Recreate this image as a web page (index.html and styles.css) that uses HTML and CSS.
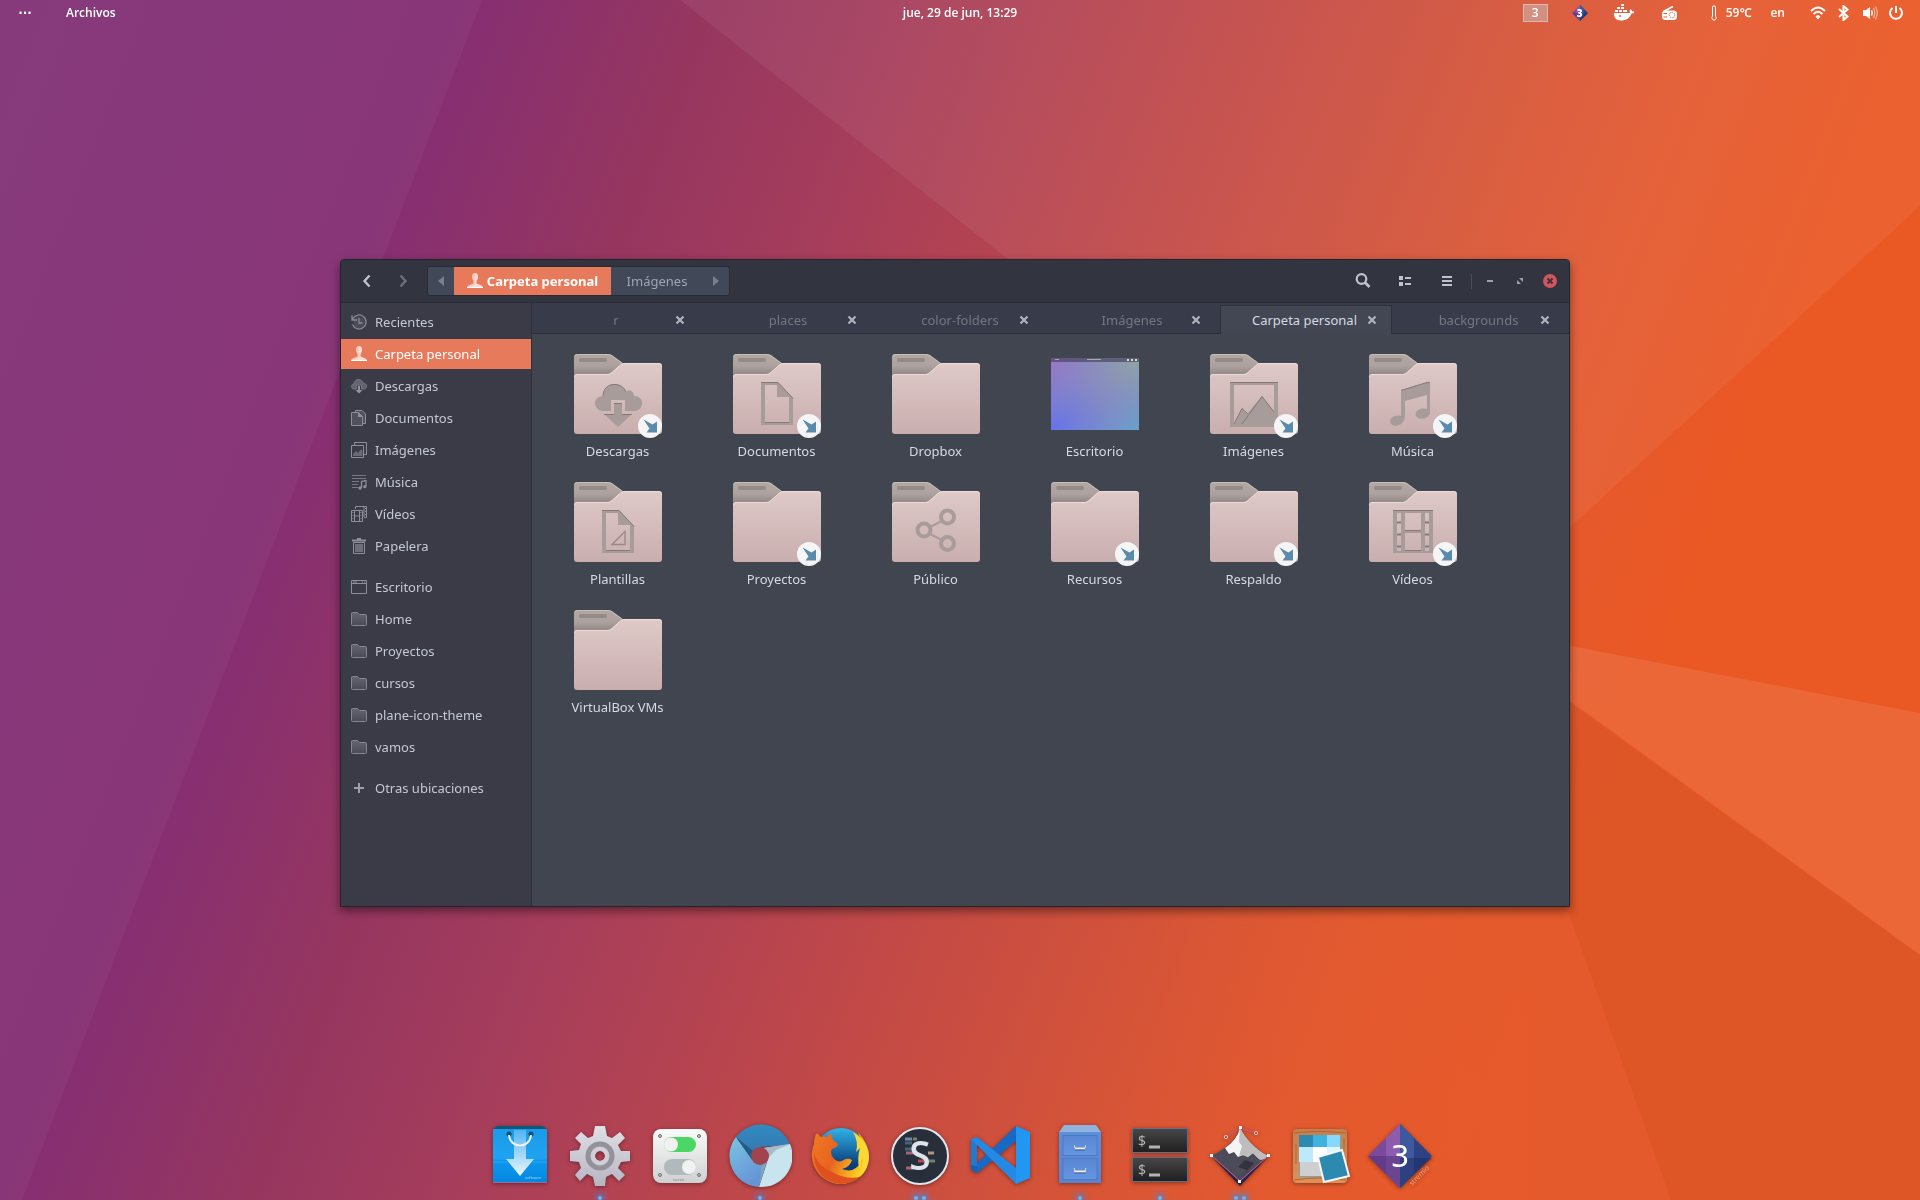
FILE: index.html
```html
<!DOCTYPE html>
<html lang="es">
<head>
<meta charset="utf-8">
<meta name="viewport" content="width=device-width, initial-scale=1">
<title>Archivos</title>
<link rel="stylesheet" href="styles.css">
</head>
<body>
<svg class="defs" aria-hidden="true">
  <defs>
    <linearGradient id="gFront" x1="0" y1="0" x2="0" y2="1"><stop offset="0" stop-color="#decac8"/><stop offset="1" stop-color="#c9aeae"/></linearGradient>
    <linearGradient id="gBack" x1="0" y1="0" x2="0" y2="1"><stop offset="0" stop-color="#b2a8a3"/><stop offset=".5" stop-color="#ada29e"/><stop offset="1" stop-color="#877d7b"/></linearGradient>
    <linearGradient id="gDesk" x1="0" y1="1" x2="1" y2="0"><stop offset="0" stop-color="#6170ee"/><stop offset=".5" stop-color="#8489c4"/><stop offset="1" stop-color="#93a89f"/></linearGradient>
    <linearGradient id="gDesk2" x1="0" y1="0" x2="1" y2="1"><stop offset="0" stop-color="#a070c4" stop-opacity=".75"/><stop offset=".5" stop-color="#8888c8" stop-opacity=".1"/><stop offset="1" stop-color="#62a6cc" stop-opacity=".85"/></linearGradient>
    <linearGradient id="gBag" x1="0" y1="0" x2="0" y2="1"><stop offset="0" stop-color="#1b9bea"/><stop offset=".55" stop-color="#1fa3f0"/><stop offset=".58" stop-color="#0d98ef"/><stop offset="1" stop-color="#0586df"/></linearGradient>
    <linearGradient id="gArrow" x1="0" y1="0" x2="0" y2="1"><stop offset="0" stop-color="#51b6f3"/><stop offset="1" stop-color="#eaf6fd"/></linearGradient>
    <linearGradient id="gGear" x1="0" y1="0" x2="0" y2="1"><stop offset="0" stop-color="#e0dfe4"/><stop offset="1" stop-color="#b6b5c3"/></linearGradient>
    <linearGradient id="gTweak" x1="0" y1="0" x2="0" y2="1"><stop offset="0" stop-color="#fafafa"/><stop offset="1" stop-color="#cfd0d1"/></linearGradient>
    <linearGradient id="gDark" x1="0" y1="0" x2="0" y2="1"><stop offset="0" stop-color="#474747"/><stop offset="1" stop-color="#1f1f1f"/></linearGradient>
    <linearGradient id="gCab" x1="0" y1="0" x2="0" y2="1"><stop offset="0" stop-color="#5b90dc"/><stop offset="1" stop-color="#5a83cf"/></linearGradient>
    <linearGradient id="gDrawer" x1="0" y1="0" x2="0" y2="1"><stop offset="0" stop-color="#5a86d3"/><stop offset="1" stop-color="#6496e2"/></linearGradient>
    <linearGradient id="gFox" x1="0" y1="0" x2="1" y2=".4"><stop offset="0" stop-color="#ee7a22"/><stop offset=".5" stop-color="#e8641f"/><stop offset="1" stop-color="#fbd324"/></linearGradient>
    <linearGradient id="gGlobe" x1="0" y1="0" x2="0" y2="1"><stop offset="0" stop-color="#2fb3e6"/><stop offset=".7" stop-color="#0b3f7c"/><stop offset="1" stop-color="#0a2a5e"/></linearGradient>
    <linearGradient id="gCh1" x1="0" y1="0" x2="0" y2="1"><stop offset="0" stop-color="#2f8bc2"/><stop offset="1" stop-color="#3b74ad"/></linearGradient>
    <linearGradient id="gCh2" x1="0" y1="0" x2=".5" y2="1"><stop offset="0" stop-color="#7cc5e2"/><stop offset="1" stop-color="#6595d6"/></linearGradient>
    <linearGradient id="gWood" x1="0" y1="0" x2="0" y2="1"><stop offset="0" stop-color="#c67f4c"/><stop offset="1" stop-color="#dd9157"/></linearGradient>
    <linearGradient id="gSide" x1="0" y1="0" x2="0" y2="1"><stop offset="0" stop-color="#666673"/><stop offset="1" stop-color="#4a4a57"/></linearGradient>

    <symbol id="folder" viewBox="0 0 88 84">
      <path d="M0 3Q0 0 3 0H34Q36 0 38 1L50 10V24H0Z" fill="url(#gBack)"/>
      <path d="M1 2Q2 .5 4 .5H34Q36 .5 38 2L48 9" fill="none" stroke="#d2c6c2" stroke-opacity=".7"/>
      <rect x="5" y="4" width="28" height="4" rx="2" fill="#948a88"/>
      <path d="M0 23Q0 20 3 20H34Q36 20 38 18L46 11Q48 9 50 9H85Q88 9 88 12V77Q88 80 85 80H3Q0 80 0 77Z" fill="url(#gFront)"/>
      <path d="M.5 23Q1 20.500 3 20.500H34Q36 20.500 38 18.500L46 11.500Q48 9.500 50 9.500H85Q87 9.500 87.500 12" fill="none" stroke="#f0e0de" stroke-opacity=".8"/>
    </symbol>
    <symbol id="link" viewBox="0 0 24 24">
      <circle cx="12" cy="12" r="12" fill="#f6f5f6"/>
      <path d="M5.500 5.500L14.500 10.500L19 7.500V18.500H8.500L11.500 14.500Z" fill="#5b8bab"/>
    </symbol>
    <symbol id="e-down" viewBox="0 0 88 84">
      <path d="M29 57C24 57 21 53 21 49C21 45 25 42 29 42C29 35 34 30 40 30C46 30 50 33 52 38C55 35 60 37 60 42C65 42 68 45 68 49C68 53 65 57 61 57H51V46H37V57Z"/><path d="M40 49H48V60H58L44 73L30 60H40Z"/><path d="M29 42C29 35 34 30.500 40 30.500C46 30.500 50 33 52 38M40 49.500H48M30 60.500H40M48 60.500H58" fill="none" stroke="#85797a"/>
    </symbol>
    <symbol id="e-doc" viewBox="0 0 88 84">
      <path fill-rule="evenodd" d="M28 28H45L60 44V71H28ZM32 31V68H56V43H44V31Z"/><path d="M28 28.500H45L60 44.500M32 68.500H56" fill="none" stroke="#85797a"/>
    </symbol>
    <symbol id="e-tpl" viewBox="0 0 88 84">
      <use href="#e-doc"/><path d="M38 62.500L51 49.500V62.500Z" fill="none" stroke="#958888" stroke-width="1.300"/>
    </symbol>
    <symbol id="e-share" viewBox="0 0 88 84">
      <g fill="none" stroke="#a89c9a" stroke-width="4"><circle cx="55.500" cy="35" r="6.500"/><circle cx="32" cy="48" r="6.500"/><circle cx="55.500" cy="61.500" r="6.500"/></g><path d="M38 45L50 39M38 52L50 58" stroke="#a89c9a" stroke-width="2"/>
    </symbol>
    <symbol id="e-img" viewBox="0 0 88 84">
      <path fill-rule="evenodd" d="M20 28H68V73H20ZM24 31V70L32 54L37 60L52 42L64 58V31Z"/><path d="M20 28.500H68M24 70L32 54.500L38 60M32 70L52 42.500L64 58" fill="none" stroke="#85797a"/>
    </symbol>
    <symbol id="e-music" viewBox="0 0 88 84">
      <path d="M32 36L58 28Q61 27 61 30V58C61 62 57 65 52 65C45 64 45 57 51 55Q55 54 58 55V41L36 47V62C36 68 31 72 26 72C20 71 19 64 26 62Q30 61 32 62Z"/><path d="M32 36.500L58 28.500Q60 28 61 29" fill="none" stroke="#85797a"/>
    </symbol>
    <symbol id="e-video" viewBox="0 0 88 84">
      <path fill-rule="evenodd" d="M24 28H64V71H24ZM28 31V39H32V31ZM28 42V51H32V42ZM28 54V63H32V54ZM28 66V69H32V66ZM56 31V39H60V31ZM56 42V51H60V42ZM56 54V63H60V54ZM56 66V69H60V66ZM36 31V48H52V31ZM36 51V68H52V51Z"/><path d="M24 28.500H64M36 48.500H52M36 68.500H52M28 40.500H32M28 52.500H32M28 64.500H32M56 40.500H60M56 52.500H60M56 64.500H60" stroke="#85797a"/>
    </symbol>
    <symbol id="desk" viewBox="0 0 88 84">
      <rect y="4" width="88" height="72" fill="url(#gDesk)"/><rect y="4" width="88" height="72" fill="url(#gDesk2)"/><rect y="4" width="88" height="4" fill="#45405a" fill-opacity=".65"/><path d="M4 5.500H8M36 5.500H50" stroke="#aaa"/><path d="M76 6H78M80 6H82M84 6H86" stroke="#d8d8d0" stroke-width="2"/>
    </symbol>

    <symbol id="x" viewBox="0 0 12 12"><path d="M2.500 2.500L9.500 9.500M9.500 2.500L2.500 9.500" stroke="currentColor" stroke-width="2.200"/></symbol>
    <symbol id="person" viewBox="0 0 16 16"><path d="M8 0C10 0 11 1.500 11 4C11 6 10 7 9.500 8V10.500C12 11.500 15 12 16 14V15H0V14C1 12 4 11.500 6.500 10.500V8C6 7 5 6 5 4C5 1.500 6 0 8 0Z" fill="#f8c9bb"/><path d="M8 0C10 0 11 1.500 11 4C11 6 10 7 9.500 8V10.500C12 11.500 15 12 16 14V15H0V14C5 13 8 13 8 9Z" fill="#fff" fill-opacity=".35"/><path d="M0 14.500H16" stroke="#fff"/></symbol>

    <symbol id="s-recent" viewBox="0 0 16 16"><circle cx="8" cy="8.500" r="5.500" fill="#4d4d5a"/><path d="M1.500 5.500A7 7 0 1 1 1.500 10.500M1 1V6H6M8 4V9H11.500" fill="none" stroke="#878998" stroke-width="1.300"/></symbol>
    <symbol id="s-down" viewBox="0 0 16 16"><path d="M3 11C1 11 .5 9.500 .5 8.500C.5 7 1.500 6 3 6C3 3.500 5 1.500 7.500 1.500C10 1.500 11.500 3 12 5C14 5 15.500 6.500 15.500 8C15.500 10 14 11 13 11H10.500V7H5.500V11Z" fill="#62636f" stroke="#747684"/><path d="M7 8H9V12H11.500L8 15.500L4.500 12H7Z" fill="#9093a1"/></symbol>
    <symbol id="s-doc" viewBox="0 0 16 16"><path d="M4.500 2V.5H11L14.500 4V13.500H12" fill="#50505d" stroke="#8c8e9b"/><path d="M.5 2.500H7.500L11.500 6.500V15.500H.5Z" fill="#50505d" stroke="#8c8e9b"/><path d="M7 2V7H12Z" fill="#8c8e9b"/></symbol>
    <symbol id="s-img" viewBox="0 0 16 16"><path d="M3.500 3.500V.5H15.500V12.500H13" fill="none" stroke="#8c8e9b"/><path d="M.5 3.500H12.500V15.500H.5Z" fill="none" stroke="#8c8e9b"/><path d="M2 14V12L5 9L7 11L10 7L11.500 9V14Z" fill="#686976"/></symbol>
    <symbol id="s-music" viewBox="0 0 16 16"><path d="M1 1.500H15M1 4.500H15M1 7.500H8M1 10.500H7M1 13.500H7" stroke="#777986"/><path d="M10.500 14V7.500L15 6.500V12.500" fill="none" stroke="#8c8e9b" stroke-width="1.300"/><circle cx="9" cy="14" r="1.800" fill="#8c8e9b"/><circle cx="13.800" cy="12.700" r="1.600" fill="#8c8e9b"/></symbol>
    <symbol id="s-video" viewBox="0 0 16 16"><path d="M4.500 3V.5H15.500V11.500H13M13 1V11" fill="none" stroke="#8c8e9b"/><path d="M.5 4.500H11.500V15.500H.5ZM3.500 4.500V15.500M8.500 4.500V15.500M3.500 10H8.500" fill="#3b3a47" stroke="#8c8e9b"/><path d="M2 6V15M10 6V15M14.500 2V11" stroke="#8c8e9b" stroke-dasharray="1 2" fill="none"/></symbol>
    <symbol id="s-trash" viewBox="0 0 16 16"><path d="M1 2.500H15M6 .5H10" stroke="#8c8e9b" stroke-width="2"/><path d="M2.500 4.500H13.500V15.500H2.500Z" fill="#3b3a47" stroke="#8c8e9b"/><rect x="4" y="6" width="8" height="8" fill="#6d6e7a"/></symbol>
    <symbol id="s-desk" viewBox="0 0 16 16"><path d="M.5 1.500H15.500V14.500H.5ZM.5 4.500H15.500" fill="none" stroke="#8c8e9b"/><path d="M2 3H6M11 3H12M13 3H14" stroke="#8c8e9b"/></symbol>
    <symbol id="s-folder" viewBox="0 0 16 16"><path d="M.5 2.500Q.5 1.500 1.500 1.500H6.500L8.500 3.500H14.500Q15.500 3.500 15.500 4.500V13.500Q15.500 14.500 14.500 14.500H1.500Q.5 14.500 .5 13.500Z" fill="url(#gSide)" stroke="#85868f"/></symbol>
    <symbol id="s-plus" viewBox="0 0 16 16"><path d="M3 8H13M8 3V13" stroke="#9da0ab" stroke-width="2"/></symbol>
    <symbol id="diamond3" viewBox="0 0 64 64">
      <path d="M32 0L0 32L32 64Z" fill="#7c4a9d"/><path d="M32 0L18 14V50L32 64Z" fill="#8d5cac"/><path d="M0 32H32V64Z" fill="#4a2c78" fill-opacity=".5"/><path d="M32 0L64 32L32 64Z" fill="#2b4384"/><path d="M32 0L46 14V50L32 64Z" fill="#3d589c"/><path d="M32 34H64L32 64Z" fill="#1b2963" fill-opacity=".5"/>
    </symbol>
  </defs>
</svg>

<svg class="wallpaper" viewBox="0 0 1920 1200" preserveAspectRatio="none" aria-hidden="true">
  <defs>
    <linearGradient id="wall" gradientUnits="userSpaceOnUse" x1="0" y1="0" x2="1670" y2="641">
      <stop offset="0" stop-color="#823277"/><stop offset=".24" stop-color="#852e73"/><stop offset=".37" stop-color="#96365f"/><stop offset=".47" stop-color="#a53d5c"/><stop offset=".64" stop-color="#c04848"/><stop offset=".8" stop-color="#d65437"/><stop offset=".9" stop-color="#e4592e"/><stop offset="1" stop-color="#ea5824"/>
    </linearGradient>
    <linearGradient id="soft" gradientUnits="userSpaceOnUse" x1="1150" y1="0" x2="1560" y2="0"><stop offset="0" stop-color="#e05c34" stop-opacity="0"/><stop offset="1" stop-color="#e05c34" stop-opacity=".5"/></linearGradient>
  </defs>
  <rect width="1920" height="1200" fill="url(#wall)"/>
  <path d="M0 0H482L22 1200H0Z" fill="#fff" fill-opacity=".04"/>
  <path d="M680 0H1920V206L1467 622Z" fill="#fff" fill-opacity=".06"/>
  <path d="M1467 626L1920 713V955Z" fill="#fff" fill-opacity=".09"/>
  <path d="M1150 628H1467L1671 1200H1150Z" fill="url(#soft)"/>
  <path d="M1467 628L1920 955V1200H1671Z" fill="#ce522b" fill-opacity=".4"/>
</svg>

<div class="desktop">
  <header class="panel">
    <div class="panel-left"><button class="dots">···</button><button>Archivos</button></div>
    <time class="clock">jue, 29 de jun, 13:29</time>
    <div class="panel-right">
      <span class="workspace">3</span>
      <span class="mini"><svg width="16" height="16"><use href="#diamond3"/></svg><b>3</b></span>
      <svg class="docker" width="22" height="18" viewBox="0 0 22 18" fill="#fff"><path d="M1 9H17Q16 6.500 17.500 5Q19 6 19 7.500Q20.500 7 21.500 8Q20.500 9.500 18.500 9.500C17 14 13 16.500 8 16.500C3 16.500 .5 13 1 9Z"/><path d="M2 6H5V8H2ZM6 6H9V8H6ZM10 6H13V8H10ZM4 3H7V5H4ZM8 3H11V5H8ZM12 6H14V8H12ZM8 0H11V2H8Z"/><circle cx="7" cy="12" r="1" fill="#df6a48"/></svg>
      <svg class="radio" width="17" height="16" viewBox="0 0 17 16" fill="none" stroke="#fff"><path d="M2.500 6.500L12 1.500" stroke-width="1.800"/><rect x="1.500" y="6" width="14" height="8.500" rx="2.500" fill="#fff"/><circle cx="11" cy="10" r="2.800" stroke="#e46538" stroke-dasharray="1.500 1"/><path d="M2.500 8.500H6M2.500 12H6" stroke="#e46538"/></svg>
      <span class="temp"><svg width="6" height="16" viewBox="0 0 6 16"><path d="M1.500 1.500Q3 0 4.500 1.500V11Q6 13 4.500 14.500Q3 16 1.500 14.500Q0 13 1.500 11Z" fill="none" stroke="#fff"/></svg>59℃</span>
      <span class="lang">en</span>
      <span class="status">
        <svg width="16" height="16" viewBox="0 0 16 16" fill="none" stroke="#fff" stroke-width="2"><path d="M1 6Q8 -1 15 6"/><path d="M3.500 9Q8 4.500 12.500 9"/><path d="M6 11.500Q8 9.500 10 11.500L8 14Z" fill="#fff" stroke-width="1"/></svg>
        <svg width="16" height="16" viewBox="0 0 16 16" fill="none" stroke="#fff" stroke-width="2"><path d="M3 4L11.500 11.500L7.500 15V1L11.500 4.500L3 12"/></svg>
        <svg width="16" height="16" viewBox="0 0 16 16"><path d="M1 5H4L8 2V14L4 11H1Z" fill="#fff"/><path d="M9.500 5.500Q11 8 9.500 10.500" stroke="#fff" stroke-width="1.500" fill="none"/><path d="M11.500 3Q14 8 11.500 13M13.500 1.500Q17 8 13.500 14.500" stroke="#fff" stroke-opacity=".5" stroke-width="1.300" fill="none"/></svg>
        <svg width="16" height="16" viewBox="0 0 16 16" fill="none" stroke="#fff" stroke-width="2"><path d="M4.500 3A6 6 0 1 0 11.500 3M8 1V8"/></svg>
      </span>
    </div>
  </header>

  <main class="window">
    <div class="titlebar">
      <button class="icon-btn" aria-label="Atrás"><svg width="10" height="14" viewBox="0 0 10 14"><path d="M7.500 1.500L2.500 7L7.500 12.500" fill="none" stroke="#bdc3cc" stroke-width="2.400"/></svg></button>
      <button class="icon-btn" aria-label="Adelante"><svg width="10" height="14" viewBox="0 0 10 14"><path d="M2.500 1.500L7.500 7L2.500 12.500" fill="none" stroke="#6c707c" stroke-width="2.400"/></svg></button>
      <nav class="pathbar">
        <button class="crumb arrow" aria-label="Anterior"><svg width="6" height="10" viewBox="0 0 6 10"><path d="M6 0V10L0 5Z" fill="#79808d"/></svg></button>
        <button class="crumb current"><svg width="16" height="16"><use href="#person"/></svg>Carpeta personal</button>
        <button class="crumb next">Imágenes</button>
        <button class="crumb arrow" aria-label="Siguiente"><svg width="6" height="10" viewBox="0 0 6 10"><path d="M0 0V10L6 5Z" fill="#79808d"/></svg></button>
      </nav>
      <div class="tools">
        <button class="icon-btn tool" aria-label="Buscar"><svg width="16" height="16" viewBox="0 0 16 16" fill="none" stroke="#bdc3cc"><circle cx="6.500" cy="6" r="4.800" stroke-width="2.200"/><path d="M10 9.500L14.500 14" stroke-width="2.600"/></svg></button>
        <button class="icon-btn tool" aria-label="Vista"><svg width="14" height="12" viewBox="0 0 14 12" fill="#bdc3cc"><path d="M1 1H5V5H1ZM1 7H5V11H1ZM7 2H13V4H7ZM7 8H13V10H7Z"/></svg></button>
        <button class="icon-btn tool" aria-label="Menú"><svg width="12" height="12" viewBox="0 0 12 12" fill="#bdc3cc"><path d="M1 1H11V3H1ZM1 5H11V7H1ZM1 9H11V11H1Z"/></svg></button>
        <span class="sep"></span>
        <button class="icon-btn ctl" aria-label="Minimizar"><svg width="6" height="6" viewBox="0 0 6 6"><path d="M0 2H6V4H0Z" fill="#9da2ad"/></svg></button>
        <button class="icon-btn ctl" aria-label="Maximizar"><svg width="6" height="6" viewBox="0 0 6 6"><path d="M2 0H6V4ZM0 2L4 6H0Z" fill="#9da2ad"/></svg></button>
        <button class="icon-btn ctl" aria-label="Cerrar"><svg width="14" height="14" viewBox="0 0 14 14"><circle cx="7" cy="7" r="7" fill="#d2555d"/><path d="M4.500 4.500L9.500 9.500M9.500 4.500L4.500 9.500" stroke="#33343f" stroke-width="1.800"/></svg></button>
      </div>
    </div>
    <div class="body">
      <nav class="sidebar">
        <a class="place" href="#"><svg><use href="#s-recent"/></svg>Recientes</a>
        <a class="place selected" href="#"><svg><use href="#person"/></svg>Carpeta personal</a>
        <a class="place" href="#"><svg><use href="#s-down"/></svg>Descargas</a>
        <a class="place" href="#"><svg><use href="#s-doc"/></svg>Documentos</a>
        <a class="place" href="#"><svg><use href="#s-img"/></svg>Imágenes</a>
        <a class="place" href="#"><svg><use href="#s-music"/></svg>Música</a>
        <a class="place" href="#"><svg><use href="#s-video"/></svg>Vídeos</a>
        <a class="place" href="#"><svg><use href="#s-trash"/></svg>Papelera</a>
        <a class="place group" href="#"><svg><use href="#s-desk"/></svg>Escritorio</a>
        <a class="place" href="#"><svg><use href="#s-folder"/></svg>Home</a>
        <a class="place" href="#"><svg><use href="#s-folder"/></svg>Proyectos</a>
        <a class="place" href="#"><svg><use href="#s-folder"/></svg>cursos</a>
        <a class="place" href="#"><svg><use href="#s-folder"/></svg>plane-icon-theme</a>
        <a class="place" href="#"><svg><use href="#s-folder"/></svg>vamos</a>
        <a class="place group" href="#"><svg><use href="#s-plus"/></svg>Otras ubicaciones</a>
      </nav>
      <section class="content">
        <div class="tabs">
          <div class="tab"><button class="tab-name">r</button><button class="tab-x" aria-label="Cerrar r"><svg><use href="#x"/></svg></button></div>
          <div class="tab"><button class="tab-name">places</button><button class="tab-x" aria-label="Cerrar places"><svg><use href="#x"/></svg></button></div>
          <div class="tab"><button class="tab-name">color-folders</button><button class="tab-x" aria-label="Cerrar color-folders"><svg><use href="#x"/></svg></button></div>
          <div class="tab"><button class="tab-name">Imágenes</button><button class="tab-x" aria-label="Cerrar Imágenes"><svg><use href="#x"/></svg></button></div>
          <div class="tab active"><button class="tab-name">Carpeta personal</button><button class="tab-x" aria-label="Cerrar Carpeta personal"><svg><use href="#x"/></svg></button></div>
          <div class="tab"><button class="tab-name">backgrounds</button><button class="tab-x" aria-label="Cerrar backgrounds"><svg><use href="#x"/></svg></button></div>
        </div>
        <div class="files">
          <a class="file" href="#"><span class="art"><svg><use href="#folder"/><use href="#e-down"/></svg><svg class="link"><use href="#link"/></svg></span>Descargas</a>
          <a class="file" href="#"><span class="art"><svg><use href="#folder"/><use href="#e-doc"/></svg><svg class="link"><use href="#link"/></svg></span>Documentos</a>
          <a class="file" href="#"><span class="art"><svg><use href="#folder"/></svg></span>Dropbox</a>
          <a class="file" href="#"><span class="art"><svg><use href="#desk"/></svg></span>Escritorio</a>
          <a class="file" href="#"><span class="art"><svg><use href="#folder"/><use href="#e-img"/></svg><svg class="link"><use href="#link"/></svg></span>Imágenes</a>
          <a class="file" href="#"><span class="art"><svg><use href="#folder"/><use href="#e-music"/></svg><svg class="link"><use href="#link"/></svg></span>Música</a>
          <a class="file" href="#"><span class="art"><svg><use href="#folder"/><use href="#e-tpl"/></svg></span>Plantillas</a>
          <a class="file" href="#"><span class="art"><svg><use href="#folder"/></svg><svg class="link"><use href="#link"/></svg></span>Proyectos</a>
          <a class="file" href="#"><span class="art"><svg><use href="#folder"/><use href="#e-share"/></svg></span>Público</a>
          <a class="file" href="#"><span class="art"><svg><use href="#folder"/></svg><svg class="link"><use href="#link"/></svg></span>Recursos</a>
          <a class="file" href="#"><span class="art"><svg><use href="#folder"/></svg><svg class="link"><use href="#link"/></svg></span>Respaldo</a>
          <a class="file" href="#"><span class="art"><svg><use href="#folder"/><use href="#e-video"/></svg><svg class="link"><use href="#link"/></svg></span>Vídeos</a>
          <a class="file" href="#"><span class="art"><svg><use href="#folder"/></svg></span>VirtualBox VMs</a>
        </div>
      </section>
    </div>
  </main>

  <nav class="dock">
    <button class="app" aria-label="Software"><svg viewBox="0 0 64 64">
      <path d="M9 2H55L59 6H5Z" fill="#0b5a78"/><rect x="5" y="5" width="54" height="54" rx="1" fill="url(#gBag)"/><path d="M5 38H59" stroke="#43b3f3" stroke-opacity=".6"/><path d="M26 6H38V35H46L32 52L18 35H26Z" fill="url(#gArrow)"/><circle cx="21" cy="10" r="2.500" fill="#0a4f74"/><circle cx="43" cy="10" r="2.500" fill="#0a4f74"/><path d="M21 11C22 25 42 25 43 11" fill="none" stroke="#f2f2ee" stroke-width="2"/><path d="M5 58.500H59" stroke="#9a6a9a"/><text x="37" y="55" font-size="4" fill="#a5d6f8">software</text></svg></button>
    <button class="app one" aria-label="Ajustes"><svg viewBox="0 0 64 64">
      <path fill="url(#gGear)" fill-rule="evenodd" d="M27 2H37L39 12L44 14L52 8L57 14L50 21L53 27L62 27V37L53 38L50 44L57 51L51 57L44 50L38 53L37 62H27L25 53L19 50L12 57L7 51L13 44L11 38L2 37V27L11 26L13 20L7 14L13 8L20 14L25 12ZM32 27A5 5 0 1 0 32 37A5 5 0 1 0 32 27Z"/><circle cx="32" cy="32" r="12" fill="none" stroke="#93929a" stroke-width="5"/><circle cx="32" cy="32" r="7" fill="none" stroke="#cfcfd8" stroke-width="4"/></svg></button>
    <button class="app" aria-label="Retoques"><svg viewBox="0 0 64 64">
      <rect x="5" y="5" width="54" height="54" rx="8" fill="url(#gTweak)"/><g fill="#b9bbbc" stroke="#6f7476"><circle cx="12" cy="12" r="1.500"/><circle cx="51" cy="12" r="1.500"/><circle cx="12" cy="51" r="1.500"/><circle cx="51" cy="51" r="1.500"/></g><rect x="16" y="13" width="32" height="15" rx="7.500" fill="#4bd763"/><circle cx="23" cy="20.500" r="7" fill="#f1f1f1"/><rect x="16" y="35" width="32" height="16" rx="8" fill="#b0babc"/><circle cx="41" cy="43" r="7" fill="#f1f1f1"/><text x="25" y="57" font-size="4" fill="#8b8f90">tweak</text></svg></button>
    <button class="app one" aria-label="Chromium"><svg viewBox="0 0 64 64">
      <path d="M8 13A31 31 0 0 1 62 21L32 23Q24 25 24 33Z" fill="url(#gCh1)"/><path d="M8 13L24 35Q27 41 35 40L31 63A31 31 0 0 1 8 13Z" fill="url(#gCh2)"/><path d="M62 20A31 31 0 0 1 31 63L40 35Q42 28 35 24Z" fill="#c8e5ef"/><path d="M62 20L36 24Q41 27 41 33L48 26Z" fill="#8f9fae" fill-opacity=".6"/><path d="M8 13L25 27Q23 31 24 36Z" fill="#245a86"/><path d="M31 63L34 40L39 37Z" fill="#7aa8c4"/><circle cx="32" cy="32" r="9" fill="#a14450"/></svg></button>
    <button class="app" aria-label="Firefox"><svg viewBox="0 0 64 64">
      <circle cx="33" cy="30" r="26" fill="url(#gGlobe)"/><path d="M9 9L13 13Q16 12 19 13Q20 10 24 10Q23 14 26 17L30 20Q30 23 24 25Q22 27 24 32Q28 39 34 37Q39 33 44 36Q42 43 34 45Q46 50 53 38Q57 27 50 8Q61 20 61 33A29 28 0 0 1 32 60A29 29 0 0 1 6 20Q6 12 9 9Z" fill="url(#gFox)"/><path d="M45 8Q61 18 61 34Q60 46 52 53Q56 42 55 33L51 44Q49 34 52 24L48 28Q51 18 45 8Z" fill="#fbd935"/><path d="M6 30A29 29 0 0 0 32 60Q44 60 52 53Q38 56 24 48Q10 42 6 30Z" fill="#e0501e"/></svg></button>
    <button class="app two" aria-label="Editor"><svg viewBox="0 0 64 64">
      <circle cx="32" cy="32" r="28" fill="#282f3b" stroke="#dfe7ee" stroke-width="2"/><g stroke-width="3"><path d="M17 15H24" stroke="#6d8aa5"/><path d="M25 15H29" stroke="#71826b"/><path d="M17 19H24M17 25H25" stroke="#4c6076"/><path d="M18 29H26M18 44H25" stroke="#a0647b"/><path d="M40 29H46" stroke="#b5927c"/><path d="M30 37H36" stroke="#b34c4c"/><path d="M41 37H47" stroke="#71826b"/></g><text class="ed" x="32" y="46" text-anchor="middle" font-size="39" fill="#dde3ea">S</text></svg></button>
    <button class="app" aria-label="Código"><svg viewBox="0 0 64 64">
      <path d="M3 45L9 49L48 17V2Z" fill="#1769c5"/><path d="M3 15L9 18V43L3 46Z" fill="#1f7ad3"/><path d="M3 15L9 13L48 44V60Z" fill="#2389e4"/><path d="M48 2L62 8V54L48 60Z" fill="#2196f3"/><path d="M3 46V41L9 42V49Z" fill="#1663b8"/></svg></button>
    <button class="app one" aria-label="Archivos"><svg viewBox="0 0 64 64">
      <path d="M16 1H48L53 8H11Z" fill="#8fb3dc"/><rect x="11" y="8" width="42" height="51" fill="url(#gCab)"/><g fill="url(#gDrawer)" stroke="#5079c4"><rect x="15" y="11.500" width="34" height="20"/><rect x="15" y="34.500" width="34" height="21"/></g><path d="M26.500 21V24M37.500 21V24M26.500 44V48M37.500 44V48" stroke="#d9d2c8"/><path d="M27 24.500H37M27 47.500H37" stroke="#f2ece2" stroke-width="2"/><path d="M27 26H37M27 49H37" stroke="#3d5f96"/></svg></button>
    <button class="app one" aria-label="Terminal"><svg viewBox="0 0 64 64">
      <g fill="url(#gDark)" stroke="#666a8c"><rect x="4.500" y="4.500" width="55" height="24"/><rect x="4.500" y="33.500" width="55" height="24"/></g><g class="term" font-size="14" fill="#b3b3b3"><text x="10" y="22">$</text><text x="10" y="51">$</text></g><path d="M21 23H32M21 51H32" stroke="#b3b3b3" stroke-width="3"/></svg></button>
    <button class="app two" aria-label="Inkscape"><svg viewBox="0 0 64 64">
      <path d="M32 62L5 34L32 56L59 34Z" fill="#25224d"/><path d="M32 4C36 13 48 27 60 32L32 58L3 32C20 24 29 14 32 4Z" fill="#4c4b59"/><path d="M32 4C36 13 48 27 60 32Q55 37 51 35L45 29L40 33L35 31L30 33L26 28L21 30L17 24Q29 16 32 4Z" fill="#f4f4f4"/><path d="M32 4C36 13 48 27 60 32Q55 37 51 35L45 29L40 33L35 31L31 32L34 22L31 18Z" fill="#bdbdbd"/><path d="M37 36L46 39L33 54L39 46L30 43Z" fill="#33323e"/><path d="M4 32L32 57L60 32M18 13L32 4L48 9" fill="none" stroke="#c8558a"/><g fill="#fff"><rect x="31" y="2" width="3" height="3"/><rect x="2" y="30" width="3" height="3"/><rect x="59" y="30" width="3" height="3"/><rect x="30" y="56" width="3" height="3"/></g><g fill="none" stroke="#f5c3b8"><circle cx="18" cy="13" r="1.700"/><circle cx="48" cy="9" r="1.700"/></g></svg></button>
    <button class="app" aria-label="Pixelado"><svg viewBox="0 0 64 64">
      <rect x="5" y="5" width="54" height="54" rx="4" fill="url(#gWood)"/><path d="M6 9Q30 6 58 9M6 56Q30 52 58 56M8 20V40M56 14V28" fill="none" stroke="#a9683a"/><rect x="11" y="11" width="42" height="42" fill="#77a3b5"/><path d="M11 11H25V23H11Z" fill="#2c8ab0"/><path d="M25 11H39V23H25Z" fill="#3eb3df"/><path d="M39 11H52V23H39Z" fill="#87d9fb"/><path d="M11 23H25V38H11Z" fill="#bde9fc"/><path d="M25 23H52V38H25Z" fill="#fff"/><path d="M39 23H52V38H39Z" fill="#dff4fd"/><path d="M12 38H52V52H12Z" fill="#cfcfcf"/><path d="M30 33L54 26L61 52L36 58Z" fill="#2c89b0" stroke="#f4f4f4" stroke-width="2"/></svg></button>
    <button class="app" aria-label="Stremio"><svg viewBox="0 0 64 64"><use href="#diamond3"/><text class="three" x="32" y="43" text-anchor="middle" font-size="30" fill="#fff">3</text><text x="0" y="0" font-size="7" fill="#ec9f7c" transform="translate(44 62) rotate(-45)">stremio</text></svg></button>
  </nav>
</div>
</body>
</html>
```
FILE: styles.css
```css
* { box-sizing: border-box; }

body {
  margin: 0;
  background: #c04848;
  font-family: "Noto Sans", "Open Sans", sans-serif;
  font-size: 13px;
  line-height: 20px;
}

button {
  margin: 0;
  padding: 0;
  border: 0;
  background: none;
  color: inherit;
  font: inherit;
}

a { color: inherit; text-decoration: none; }
svg { display: block; flex: none; }

.defs { position: absolute; width: 0; height: 0; }

.wallpaper {
  position: fixed;
  inset: 0;
  width: 100%;
  height: 100%;
  z-index: -1;
}

.desktop {
  display: flex;
  flex-direction: column;
  min-height: 100vh;
}

/* Top panel */
.panel {
  display: grid;
  grid-template-columns: 1fr auto 1fr;
  align-items: center;
  height: 26px;
  padding: 0 16px;
  color: #fff;
  font-family: "Open Sans", "Noto Sans", sans-serif;
  font-size: 12px;
  font-weight: 600;
}
.panel-left { display: flex; gap: 32px; }
.dots { width: 18px; font-family: "DejaVu Sans", sans-serif; }
.panel-right { display: flex; justify-content: flex-end; align-items: center; }
.workspace {
  width: 25px;
  height: 18px;
  margin-right: 24px;
  border: 1px solid #dcb8ae;
  background: #d29082;
  line-height: 16px;
  text-align: center;
}
.mini { display: grid; place-items: center; margin-right: 25px; }
.mini > * { grid-area: 1 / 1; }
.mini b { font-size: 10px; line-height: 16px; }
.docker { margin-right: 26px; }
.radio { margin-right: 33px; }
.temp { display: flex; align-items: center; gap: 9px; margin-right: 19px; }
.lang { margin-right: 25px; }
.status { display: flex; gap: 10px; }

/* File manager window */
.window {
  display: flex;
  flex-direction: column;
  min-height: 54vh;
  margin: 233px 350px 0 340px;
  border: 1px solid #23242e;
  border-radius: 4px 4px 0 0;
  background: #414550;
  color: #c3c9d3;
  box-shadow: 0 4px 10px rgba(0, 0, 0, 0.45);
}

.titlebar {
  display: flex;
  align-items: center;
  height: 43px;
  padding: 0 8px;
  border-bottom: 1px solid #2a2b36;
  border-radius: 3px 3px 0 0;
  background: #32343f;
}
.icon-btn { display: grid; place-items: center; width: 36px; height: 28px; }
.pathbar {
  display: flex;
  height: 30px;
  margin-left: 6px;
  border: 1px solid #282a35;
  border-radius: 3px;
  background: #414857;
}
.crumb { display: flex; align-items: center; justify-content: center; color: #9ea5b2; }
.crumb.arrow { width: 26px; }
.crumb.current {
  gap: 4px;
  width: 157px;
  background: #e77a5b;
  color: #fff;
  font-weight: 700;
}
.crumb.next { width: 92px; }
.tools { display: flex; align-items: center; margin-left: auto; }
.tool { width: 42px; }
.sep { width: 1px; height: 15px; margin: 0 3px; background: #4b4e5a; }
.ctl { width: 30px; }
.ctl:last-child { margin-right: -4px; }

.body { display: flex; flex: 1; }

.sidebar {
  display: flex;
  flex-direction: column;
  gap: 2px;
  width: 191px;
  padding: 4px 0;
  border-right: 1px solid #2e2f3b;
  background: #3b3a47;
}
.place {
  display: flex;
  align-items: center;
  gap: 8px;
  height: 30px;
  padding: 0 10px;
}
.place svg { width: 16px; height: 16px; }
.place.group { margin-top: 9px; }
.place.selected { background: #e77a5b; color: #fff; }

.content { flex: 1; min-width: 0; }

.tabs {
  display: grid;
  grid-template-columns: repeat(5, 172fr) 177fr;
  height: 31px;
  background: #383c4a;
  box-shadow: inset 0 -1px #2d2f3b;
}
.tab {
  display: flex;
  align-items: center;
  padding: 2px 18px 0 26px;
  color: #737783;
}
.tab.active {
  margin-top: 2px;
  padding: 0 13px 0 22px;
  border: 1px solid #2d2f3b;
  border-bottom: 0;
  background: #434753;
  color: #d3dae3;
}
.tab-name { flex: 1; white-space: nowrap; }
.tab-x { color: #aeb4be; }
.tab-x svg { width: 12px; height: 12px; }

.files {
  display: grid;
  grid-template-columns: repeat(auto-fill, 159px);
  grid-auto-rows: 128px;
  padding: 20px 0 0 6px;
}
.file {
  display: flex;
  flex-direction: column;
  align-items: center;
  gap: 3px;
  color: #d3dae3;
}
.art { position: relative; width: 88px; height: 84px; }
.art svg { width: 88px; height: 84px; fill: #a89c9a; overflow: visible; }
.art .link { position: absolute; right: 0; bottom: 0; width: 24px; height: 24px; }

/* Dock */
.dock {
  display: flex;
  justify-content: center;
  gap: 16px;
  margin-top: auto;
  padding-top: 16px;
}
.app { position: relative; width: 64px; height: 76px; }
.app svg {
  width: 64px;
  height: 64px;
  margin-bottom: 12px;
  filter: drop-shadow(0 1px 2px rgba(0, 0, 0, 0.4));
}
.app.one::after,
.app.two::after {
  content: "";
  position: absolute;
  left: 50%;
  bottom: 0;
  width: 4px;
  height: 4px;
  margin-left: -2px;
  border-radius: 50%;
  background: #6ab4f5;
  box-shadow: 0 0 6px 2px #4a87d8;
}
.app.two::after {
  margin-left: -6px;
  box-shadow: 8px 0 #6ab4f5, 0 0 6px 2px #4a87d8, 8px 0 6px 2px #4a87d8;
}
.ed { font-family: "Open Sans", sans-serif; font-weight: 600; }
.term { font-family: "Noto Sans", sans-serif; }
.three { font-family: "DejaVu Sans", sans-serif; }
```
